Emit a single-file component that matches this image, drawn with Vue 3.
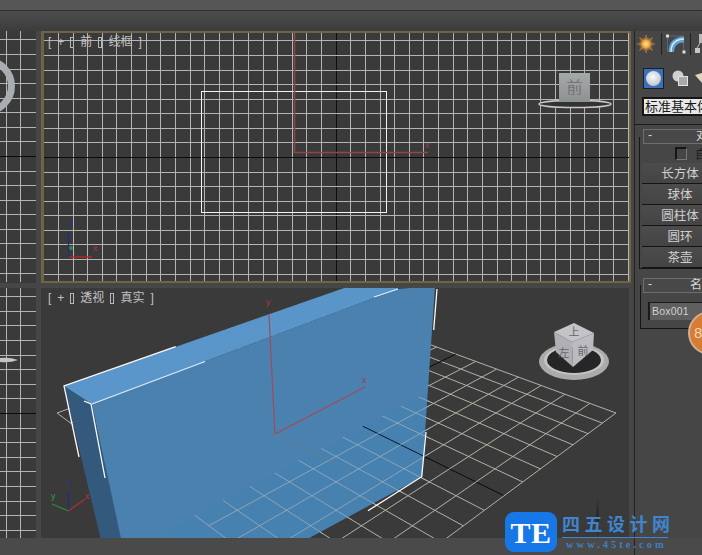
<script setup>
const range = (a, b) => Array.from({ length: b - a + 1 }, (_, i) => a + i)
const snap = v => Math.round(v) + 0.5

// orthographic grids
const stepX = 14.62
const stepY = 14.58
const topY = range(-9, 9).map(k => ({ y: snap(157 + k * stepY), axis: k === 0 }))
const topX = range(-19, 20).map(k => ({ x: snap(335.7 + k * stepX), axis: k === 0 }))
const sideX = [6.5, 20.5]
const lowY = range(-8, 9).map(k => ({ y: snap(413 + k * 14.6), axis: k === 0 }))

// perspective floor grid, from its four corners
const [p0, p1, p2, p3] = [[336, 310], [616, 413], [336, 620], [57, 413]]
const dx1 = p1[0] - p2[0], dx2 = p3[0] - p2[0], sx = p0[0] - p1[0] + p2[0] - p3[0]
const dy1 = p1[1] - p2[1], dy2 = p3[1] - p2[1], sy = p0[1] - p1[1] + p2[1] - p3[1]
const den = dx1 * dy2 - dx2 * dy1
const g = (sx * dy2 - dx2 * sy) / den
const h = (dx1 * sy - sx * dy1) / den
const a = p1[0] - p0[0] + g * p1[0], b = p3[0] - p0[0] + h * p3[0]
const d = p1[1] - p0[1] + g * p1[1], e = p3[1] - p0[1] + h * p3[1]
const project = (u, v) => {
  const w = g * u + h * v + 1
  return [(a * u + b * v + p0[0]) / w, (d * u + e * v + p0[1]) / w]
}
const floor = range(0, 14).flatMap(i => {
  const t = i / 14
  const [x1, y1] = project(t, 0), [x2, y2] = project(t, 1)
  const [x3, y3] = project(0, t), [x4, y4] = project(1, t)
  return [
    { id: 'u' + i, x1, y1, x2, y2, axis: i === 7 },
    { id: 'v' + i, x1: x3, y1: y3, x2: x4, y2: y4, axis: i === 7 }
  ]
})
const primitives = ['长方体', '球体', '圆柱体', '圆环', '茶壶']
</script>

<template>
  <div class="app">
    <header class="topbar">
      <div class="menu"></div>
      <div class="tools"></div>
    </header>

    <main class="main">
      <section class="views">
        <div class="pane side">
          <svg viewBox="0 32 36 251" width="36" height="251">
            <g class="gl"><line v-for="x in sideX" :key="x" :x1="x" :x2="x" y1="32" y2="283" /></g>
            <g v-for="l in topY" :key="l.y" :class="l.axis ? 'ax' : 'gl'"><line x1="0" x2="36" :y1="l.y" :y2="l.y" /></g>
            <circle cx="-14" cy="87" r="25.5" fill="none" stroke="#a9acb0" stroke-width="7" />
          </svg>
        </div>

        <div class="pane active">
          <svg viewBox="44 33 585 248" width="585" height="248">
            <g v-for="l in topX" :key="l.x" :class="l.axis ? 'ax' : 'gl'"><line :x1="l.x" :x2="l.x" y1="33" y2="281" /></g>
            <g v-for="l in topY" :key="l.y" :class="l.axis ? 'ax' : 'gl'"><line x1="44" x2="629" :y1="l.y" :y2="l.y" /></g>
            <rect x="201.5" y="91.5" width="185" height="121" fill="none" stroke="#f2f2f2" class="crisp" />
            <path d="M294.5 33V152.5H428" fill="none" stroke="#8e4944" stroke-width="1.6" />
            <text x="425" y="148" class="tiny red">x</text>
            <path d="M68.5 232V257" stroke="#1c2a8c" stroke-width="1.2" />
            <path d="M69 257H92" stroke="#b02a2a" stroke-width="1.4" />
            <circle cx="71" cy="248" r="2" fill="#2d8a4a" />
            <text x="68" y="226" class="tiny blue">z</text>
            <text x="93" y="251" class="tiny red">x</text>
            <defs>
              <linearGradient id="face" x1="0" y1="0" x2="0" y2="1">
                <stop offset="0" stop-color="#a6a9aa" />
                <stop offset="1" stop-color="#8e9192" />
              </linearGradient>
            </defs>
            <ellipse cx="575" cy="104" rx="36" ry="3.5" fill="#333" stroke="#c9c9c9" stroke-width="1.6" />
            <rect x="559" y="73" width="31" height="29" fill="url(#face)" />
            <text x="574.5" y="93" class="cube flat">前</text>
          </svg>
          <div class="vp-label"><span>[</span><span>+</span><i></i><span>前</span><i></i><span>线框</span><span>]</span></div>
        </div>

        <div class="pane side">
          <svg viewBox="0 288 36 250" width="36" height="250">
            <g class="gl"><line v-for="x in sideX" :key="x" :x1="x" :x2="x" y1="288" y2="538" /></g>
            <g v-for="l in lowY" :key="l.y" :class="l.axis ? 'ax' : 'gl'"><line x1="0" x2="36" :y1="l.y" :y2="l.y" /></g>
            <path d="M0 358Q10 357 18 360Q10 363 0 362Z" fill="#c4c4c4" />
          </svg>
        </div>

        <div class="pane persp">
          <svg viewBox="41 288 588 250" width="588" height="250">
            <defs>
              <clipPath id="front"><polygon points="120,555 430,391 430,480 300,545" /></clipPath>
              <linearGradient id="frontFace" x1="0" y1="0" x2="1" y2="1">
                <stop offset="0" stop-color="#4a80ac" />
                <stop offset="1" stop-color="#4b82b2" />
              </linearGradient>
              <linearGradient id="topFace" x1="0" y1="1" x2="1" y2="0">
                <stop offset="0" stop-color="#5a96cb" />
                <stop offset="1" stop-color="#5a95c8" />
              </linearGradient>
            </defs>

            <g v-for="l in floor" :key="l.id" :class="l.axis ? 'fl-ax' : 'fl'">
              <line :x1="l.x1" :y1="l.y1" :x2="l.x2" :y2="l.y2" />
            </g>

            <polygon points="64,386 92,404 122,540 101,540" fill="#33597d" />
            <polygon points="64,386 350,286 398,286 398,289 92,404" fill="url(#topFace)" />
            <polygon points="92,404 398,289 435,286 422,477 300,543 122,543" fill="url(#frontFace)" />

            <g clip-path="url(#front)">
              <g v-for="l in floor" :key="l.id" :class="l.axis ? 'fl-ax-top' : 'fl-top'">
                <line :x1="l.x1" :y1="l.y1" :x2="l.x2" :y2="l.y2" />
              </g>
            </g>

            <path d="M175.7 346.7L64 386L79 457" class="wire" />
            <path d="M84 401L91 404L105 478" class="wire" />
            <path d="M92 404L205 361.5M374 297L398 289" class="wire lite" />
            <path d="M437 289L433.7 330" class="wire" />
            <path d="M426 432L421.7 476.7L368 510.7" class="wire" />

            <path d="M269 315L275 434L365 387" fill="none" stroke="#a34a5a" stroke-width="1.2" />
            <path d="M275 434L351 470" fill="none" stroke="#617d92" stroke-width="1" />
            <text x="266" y="305" class="tiny red">y</text>
            <text x="362" y="383" class="tiny red">x</text>

            <path d="M68.5 511V491" stroke="#1d2a92" stroke-width="1.2" />
            <path d="M68.5 511L52 504" stroke="#2f8a3a" stroke-width="1.2" />
            <path d="M68.5 511L85 499" stroke="#a83030" stroke-width="1.4" />
            <text x="68" y="486" class="tiny blue">z</text>
            <text x="51" y="499" class="tiny green">y</text>
            <text x="85" y="499" class="tiny red">x</text>

            <ellipse cx="574" cy="361.5" rx="35" ry="18.5" fill="#a9abab" />
            <ellipse cx="574" cy="360" rx="30" ry="15" fill="#c3c5c5" />
            <ellipse cx="574" cy="360" rx="27" ry="13" fill="#262626" />
            <polygon points="574,323 594,333 572,342 554,332" fill="#c4c4c8" />
            <polygon points="554,332 572,342 573,367 556,352" fill="#b0b0b4" />
            <polygon points="572,342 594,333 593,350 573,367" fill="#bcbcc0" />
            <text x="574" y="336" class="cube small">上</text>
            <text x="564" y="357" class="cube small">左</text>
            <text x="583" y="355" class="cube small">前</text>
          </svg>
          <div class="vp-label"><span>[</span><span>+</span><i></i><span>透视</span><i></i><span>真实</span><span>]</span></div>
        </div>
      </section>

      <aside class="panel">
        <div class="tabs">
          <svg class="ico sun" viewBox="0 0 20 20" width="20" height="20">
            <defs>
              <radialGradient id="sun">
                <stop offset="0" stop-color="#ffe8a8" />
                <stop offset=".5" stop-color="#f0a23c" />
                <stop offset="1" stop-color="#8a6430" stop-opacity=".15" />
              </radialGradient>
            </defs>
            <path d="M10 1V19M1 10H19M3.6 3.6L16.4 16.4M16.4 3.6L3.6 16.4" stroke="#b9823a" stroke-width="1.2" />
            <circle cx="10" cy="10" r="7.5" fill="url(#sun)" />
          </svg>
          <span class="sep"></span>
          <svg class="ico" viewBox="0 0 20 20" width="20" height="20">
            <path d="M1.5 17.5V2H17.5V17.5" fill="none" stroke="#5c6a74" />
            <path d="M2.5 18Q2.5 3 18 2.5V8.5Q8 8.5 8 18Z" fill="#5f9fd2" />
            <path d="M5 18Q5 5.5 18 5" fill="none" stroke="#d6eaf8" stroke-width="1.4" />
            <rect x="0" y="0.5" width="3" height="3" fill="#ddd" />
            <rect x="16.5" y="16.5" width="3" height="3" fill="#ddd" />
          </svg>
          <span class="sep"></span>
          <svg class="ico" viewBox="0 0 12 20" width="12" height="20">
            <rect x="4" y="0" width="8" height="9" fill="#b9b9b9" />
            <rect x="0" y="14" width="5" height="5" fill="#c6c6c6" />
            <path d="M5 9L2 14" stroke="#bbb" />
          </svg>
        </div>

        <div class="cats">
          <div class="cat on"><span class="ball"></span></div>
          <svg class="ico shape" viewBox="0 0 16 16" width="16" height="16">
            <circle cx="6" cy="6" r="5.5" fill="#cfcfcf" />
            <rect x="6.5" y="6.5" width="9" height="9" fill="#a9a9a9" stroke="#e3e3e3" />
          </svg>
          <svg class="ico wedge" viewBox="0 0 12 12" width="12" height="12">
            <path d="M0 3L10 0V7L7 11Z" fill="#dcd8b8" />
          </svg>
        </div>

        <div class="select">标准基本体</div>

        <div class="stack">
          <section class="roll first">
            <div class="roll-head"><span class="minus">-</span><span class="roll-title">对象类型</span></div>
            <div class="auto"><span class="check"></span><span>自动栅格</span></div>
            <button v-for="p in primitives" :key="p" class="prim">{{ p }}</button>
          </section>

          <section class="roll second">
            <div class="roll-head"><span class="minus">-</span><span class="roll-title">名称和颜色</span></div>
            <div class="name">Box001</div>
          </section>
        </div>
      </aside>
    </main>

    <footer class="status"><span class="divider"></span></footer>

    <div class="streak"></div>
    <div class="badge"><span>8</span></div>

    <div class="mark">
      <div class="mark-logo">TE</div>
      <div class="mark-text">
        <div class="mark-cn">四五设计网</div>
        <div class="mark-url">www.45te.com</div>
      </div>
    </div>
  </div>
</template>

<style scoped>
.app {
  position: relative;
  width: 702px;
  height: 555px;
  overflow: hidden;
  display: flex;
  flex-direction: column;
  background: #4a4a4a;
  font-family: "Liberation Sans", "Noto Sans CJK SC", sans-serif;
}
.topbar { flex: none; height: 31px; }
.menu { height: 10px; background: #565656; border-bottom: 1px solid #2f2f2f; }
.tools { height: 20px; background: linear-gradient(#4d4d4d, #3c3c3c); }

.main { flex: none; height: 507px; display: flex; }
.views {
  flex: none;
  width: 634px;
  display: grid;
  grid-template-columns: 36px 590px;
  grid-template-rows: 252px 250px;
  gap: 5px;
  align-content: start;
  background: #464646;
}
.pane { position: relative; overflow: hidden; background: #3a3a3a; }
.pane svg { display: block; }
.active { border: solid #6f6444; border-width: 2px 2px 2px 3px; }
.persp { width: 588px; }

.gl line { stroke: #b4b4b4; stroke-width: 1; shape-rendering: crispEdges; }
.ax line { stroke: #0c0c0c; stroke-width: 1; shape-rendering: crispEdges; }
.crisp { shape-rendering: crispEdges; }
.fl line { stroke: #b2b2a6; stroke-width: 1; }
.fl-ax line { stroke: #0c0c0c; stroke-width: 1; }
.fl-top line { stroke: #b4bcc0; stroke-width: 1; opacity: 0.62; }
.fl-ax-top line { stroke: #0b1a2a; stroke-width: 1; }
.wire { fill: none; stroke: #fbfbfb; stroke-width: 1.3; }
.wire.lite { stroke: #dff0fb; stroke-width: 1.1; }

.tiny { font-family: "Liberation Sans", sans-serif; font-size: 9px; }
.red { fill: #a8383e; }
.blue { fill: #23309a; }
.green { fill: #2f9a48; }
.cube { font-family: "Noto Sans CJK SC", sans-serif; text-anchor: middle; }
.flat { font-size: 16px; fill: #727576; }
.small { font-size: 11px; fill: #66666b; }

.vp-label {
  position: absolute;
  left: 7px;
  top: 2px;
  display: flex;
  align-items: center;
  gap: 6px;
  color: #c2c2c2;
  font-size: 12px;
  line-height: 16px;
}
.active .vp-label { left: 4px; top: 1px; }
.vp-label i { width: 2px; height: 9px; border: 1px solid #b8b8b8; }

.panel {
  flex: none;
  width: 68px;
  box-sizing: border-box;
  overflow: hidden;
  background: #464646;
  border-left: 1px solid #232323;
}
.ico { display: block; flex: none; }
.tabs { display: flex; align-items: center; height: 22px; margin-top: 2px; padding-left: 1px; }
.sep { width: 1px; height: 22px; margin: 0 4px 0 5px; background: #202020; flex: none; }
.sep + .ico + .sep { margin-left: 4px; }
.cats { display: flex; align-items: center; height: 22px; margin-top: 12px; padding-left: 8px; gap: 8px; }
.cat { width: 21px; height: 21px; display: flex; align-items: center; justify-content: center; flex: none; }
.on { background: #3a70ba; border: 1px solid #1e1e1e; box-sizing: border-box; }
.ball { width: 15px; height: 15px; border-radius: 50%; background: radial-gradient(circle at 45% 40%, #fafafa, #c9ccd2 65%, #9aa0aa); }
.wedge { margin-left: -1px; }
.select {
  margin: 8px 0 0 7px;
  width: 70px;
  height: 19px;
  box-sizing: border-box;
  border: 2px solid #161616;
  border-right: 0;
  padding-left: 1px;
  background: #e9e9e9;
  color: #161616;
  font-size: 13px;
  line-height: 15px;
  white-space: nowrap;
  overflow: hidden;
}
.stack { margin-top: 8px; width: 170px; border-top: 1px solid #1a1a1a; }
.roll { display: flow-root; margin-left: 4px; width: 165px; box-sizing: border-box; border: solid #161616; border-width: 0 0 1px 1px; }
.first { margin-top: 12px; height: 132px; }
.second { margin-top: 16px; margin-left: 5px; height: 44px; }
.roll-head {
  position: relative;
  box-sizing: border-box;
  width: 154px;
  height: 15px;
  margin: -8px 0 0 3px;
  border: 1px solid #6e6e6e;
  background: #484848;
  color: #d8d8d8;
  font-size: 12px;
  line-height: 13px;
  text-align: center;
}
.second .roll-head { margin: -7px 0 0 2px; }
.minus { position: absolute; left: 4px; top: -1px; }
.auto {
  display: flex;
  align-items: center;
  gap: 8px;
  height: 19px;
  padding-left: 35px;
  color: #1c1c1c;
  font-size: 12px;
  white-space: nowrap;
}
.check { width: 9px; height: 10px; border: solid; border-color: #161616 #777 #777 #161616; border-width: 2px 1px 1px 2px; flex: none; }
.prim {
  display: block;
  width: 76px;
  height: 21px;
  margin: 0 0 0 2px;
  padding: 2px 0 0;
  border: 0;
  border-bottom: 1px solid #141414;
  background: linear-gradient(#4c4c4c, #444);
  color: #d0d0d0;
  font: 12.5px/18px "Liberation Sans", "Noto Sans CJK SC", sans-serif;
}
.name {
  width: 60px;
  height: 18px;
  margin: 9px 0 0 7px;
  box-sizing: border-box;
  padding-left: 2px;
  background: #5f5f5f;
  border: solid #1b1b1b;
  border-width: 1px 0 0 2px;
  color: #d2d2d2;
  font-size: 10.5px;
  line-height: 16px;
  letter-spacing: 0.2px;
}

.status { flex: 1; background: #4a4a4a; padding-left: 634px; }
.divider { display: block; width: 1px; height: 100%; background: #232323; }
.streak {
  position: absolute;
  left: 596px;
  top: 498px;
  width: 3px;
  height: 42px;
  background: linear-gradient(transparent, #262626 50%, transparent);
}

.badge {
  position: absolute;
  left: 688px;
  top: 311px;
  width: 44px;
  height: 44px;
  box-sizing: border-box;
  border-radius: 50%;
  border: 2px solid #d3ad92;
  background: #d77d33;
  color: #f3d6b6;
  font-size: 15px;
  line-height: 40px;
  padding-left: 4px;
}

.mark { position: absolute; left: 505px; top: 512px; display: flex; gap: 4px; }
.mark-logo {
  width: 52px;
  height: 40px;
  border-radius: 9px;
  background: #1777e6;
  color: #fff;
  font: 700 30px/41px "Liberation Serif", serif;
  text-align: center;
  letter-spacing: 0.5px;
}
.mark-text { width: 112px; }
.mark-cn {
  color: #3f85cf;
  font: 700 18px/22px "Noto Sans CJK SC", sans-serif;
  letter-spacing: 4.5px;
  white-space: nowrap;
  border-bottom: 1px solid #3f85cf;
  width: 106px;
  margin-left: 1px;
  height: 25px;
}
.mark-url {
  margin: 1px 0 0 5px;
  color: #3f7fc2;
  font: 700 10.5px/11px "Liberation Serif", serif;
  letter-spacing: 3px;
  white-space: nowrap;
}
</style>
